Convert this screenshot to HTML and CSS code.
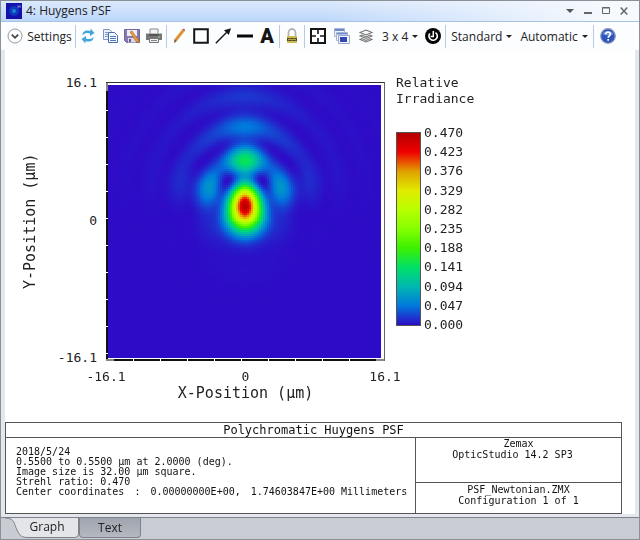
FILE: index.html
```html
<!DOCTYPE html>
<html lang="en">
<head>
    <meta charset="UTF-8">
    <title>4: Huygens PSF</title>
    <link rel="stylesheet" href="styles.css">
</head>
<body>

<div class="window">
    <header class="titlebar">
        <svg class="app-icon" width="16" height="16" viewBox="0 0 16 16">
            <rect width="16" height="16" fill="#1410a8"/>
            <circle cx="8" cy="8" r="5" fill="#1038c0"/>
            <circle cx="8" cy="8" r="2" fill="#1c88c8"/>
            <path d="M12 2v3M14 2v3M12 3.5h2" stroke="#7070e0" fill="none"/>
        </svg>
        <h1>4: Huygens PSF</h1>
        <div class="window-buttons">
            <button type="button" aria-label="Menu"><svg width="8" height="10" viewBox="0 0 8 10"><path d="M0 3h8L4 7z" fill="#555"/></svg></button>
            <button type="button" aria-label="Minimize"><svg width="8" height="10" viewBox="0 0 8 10"><path d="M0 6h8v2H0z" fill="#666"/></svg></button>
            <button type="button" aria-label="Maximize"><svg width="8" height="10" viewBox="0 0 8 10"><path d="M.5 1.5h7v6h-7zM0 2h8" stroke="#666" fill="none"/></svg></button>
            <button type="button" aria-label="Close"><svg width="8" height="10" viewBox="0 0 8 10"><path d="M.7 1.5l6.6 7M7.3 1.5l-6.6 7" stroke="#666" stroke-width="1.5"/></svg></button>
        </div>
    </header>

    <nav class="toolbar">
        <button type="button" class="settings">
            <svg width="16" height="16" viewBox="0 0 16 16"><circle cx="8" cy="8" r="7" fill="#fff" stroke="#999"/><path d="M4.8 6.6L8 9.8l3.2-3.2" fill="none" stroke="#444" stroke-width="1.8"/></svg>
            Settings
        </button>
        <span class="sep"></span>
        <button type="button" aria-label="Refresh">
            <svg width="16" height="16" viewBox="0 0 16 16"><path d="M2.500 7C2.500 3 6.500 1.500 10.500 3V.5l4 4.500-4.500 3V5.500C8 4.500 5 4.500 2.500 7z" fill="#42a4d8"/><path d="M13.500 9c0 4-4 5.500-8 4v2.500l-4-4.500L6 8v2.500c2 1 5 1 7.500-1.500z" fill="#42a4d8"/></svg>
        </button>
        <button type="button" aria-label="Copy">
            <svg width="16" height="16" viewBox="0 0 16 16"><path d="M1.500 1.500h6l2 2v8h-8z" fill="#eaf1fc" stroke="#7c98c8"/><path d="M3 4.500h4M3 6.500h4M3 8.500h4" stroke="#7c98c8"/><path d="M6.500 4.500h6l3 3v7h-9z" fill="#f4f8ff" stroke="#4a6cb0"/><path d="M8 8.500h6M8 10.500h6M8 12.500h6" stroke="#4f78c0"/></svg>
        </button>
        <button type="button" aria-label="Save">
            <svg width="16" height="16" viewBox="0 0 16 16"><path d="M.5 1.500h15v13h-13l-2-2z" fill="#8a78b4" stroke="#75659f"/><path d="M3 2h10v6H3z" fill="#efedf7"/><path d="M4 10h8v4.500H4z" fill="#ddd9ea"/><path d="M5 11h2v3H5z" fill="#66568e"/><path d="M6 4l2-1 6.500 9 .5 3-3-1.500z" fill="#e59c3c" stroke="#a86820" stroke-width=".6"/></svg>
        </button>
        <button type="button" aria-label="Print">
            <svg width="16" height="16" viewBox="0 0 16 16"><path d="M4 1h8v5H4z" fill="#f4f4f4" stroke="#888"/><path d="M0 5.500h3V8h10V5.500h3V12H0z" fill="#777"/><path d="M3 6h10v2H3z" fill="#555"/><path d="M3.500 10.500h9v4h-9z" fill="#f0f0f0" stroke="#777"/><path d="M5 12.500h6" stroke="#888"/><path d="M12 9h2" stroke="#8d8"/></svg>
        </button>
        <span class="sep"></span>
        <button type="button" aria-label="Pencil">
            <svg width="16" height="16" viewBox="0 0 16 16"><path d="M11 1.500L13.500 3.500 6 13 3.500 11z" fill="#e5a244"/><path d="M12.200 2.500L4.800 12" stroke="#bf7a28" stroke-width=".8"/><path d="M11 1.500q2-1.500 3 0l-.5 2z" fill="#c25a48"/><path d="M3.500 11L6 13l-3 2z" fill="#7a5530"/></svg>
        </button>
        <button type="button" aria-label="Rectangle">
            <svg width="16" height="16" viewBox="0 0 16 16"><path d="M1.200 1.200h13.600v13.600H1.200z" fill="none" stroke="#151515" stroke-width="2"/></svg>
        </button>
        <button type="button" aria-label="Arrow">
            <svg width="16" height="16" viewBox="0 0 16 16"><path d="M.8 15.200L11.500 4.500" stroke="#151515" stroke-width="1.400"/><path d="M16 .2L13.800 7 9 2.200z" fill="#151515"/></svg>
        </button>
        <button type="button" aria-label="Line">
            <svg width="16" height="16" viewBox="0 0 16 16"><path d="M0 6.500h16v3H0z" fill="#080808"/></svg>
        </button>
        <button type="button" class="letter">A</button>
        <span class="sep"></span>
        <button type="button" aria-label="Lock">
            <svg width="16" height="16" viewBox="0 0 16 16"><path d="M4.500 9V4.500a3.500 3.500 0 0 1 7 0V9" fill="none" stroke="#b4b4b4" stroke-width="1.800"/><path d="M3 8h10v7H3z" fill="#cdbb58"/><path d="M3 10h10v3H3z" fill="#4c4820"/><path d="M4 12l2-1 2 1 2-1 2 1" stroke="#d8c85a" fill="none"/></svg>
        </button>
        <span class="sep"></span>
        <div class="wide-icons">
            <button type="button" aria-label="Fit window">
                <svg width="16" height="16" viewBox="0 0 16 16"><path d="M1 1h14v14H1z" fill="#fff" stroke="#151515" stroke-width="2"/><path d="M8 1v5M8 10v5M1 8h5M10 8h5" stroke="#151515" stroke-width="1.600"/></svg>
            </button>
            <button type="button" aria-label="Windows">
                <svg width="16" height="16" viewBox="0 0 16 16"><path d="M.5 .5h10v8H.5z" fill="#edf1fb" stroke="#a7b4d8"/><path d="M1 1h9v2H1z" fill="#6f88cc"/><path d="M2.500 4.500h11v8h-11z" fill="#f2f5fc" stroke="#a7b4d8"/><path d="M3 5h10v1.500H3z" fill="#6f88cc"/><path d="M4.500 7.500h11v8h-11z" fill="#f2f5fc" stroke="#98a6d0"/><path d="M6 9h7v5H6z" fill="#3346b4"/></svg>
            </button>
            <button type="button" aria-label="Layers">
                <svg width="16" height="16" viewBox="0 0 16 16"><path d="M8 2l6 2.500L8 7 2 4.500zM2 8l2-1 4 2 4-2 2 1-6 2.500zM2 11.500l2-1 4 2 4-2 2 1L8 14z" fill="#fafafa" stroke="#777" stroke-width="1.100"/></svg>
            </button>
        </div>
        <button type="button" class="drop">3 x 4<span class="caret"></span></button>
        <button type="button" aria-label="Reset">
            <svg width="16" height="16" viewBox="0 0 16 16"><circle cx="8" cy="8" r="8" fill="#050505"/><path d="M4.800 5.500A4.200 4.200 0 1 0 10.500 4.600" fill="none" stroke="#fff" stroke-width="1.600"/><path d="M8.300 3v5.500H5.500" fill="none" stroke="#fff" stroke-width="1.500"/></svg>
        </button>
        <span class="sep"></span>
        <button type="button" class="drop">Standard<span class="caret"></span></button>
        <button type="button" class="drop">Automatic<span class="caret"></span></button>
        <span class="sep"></span>
        <button type="button" class="help" aria-label="Help">
            <svg width="16" height="16" viewBox="0 0 16 16"><circle cx="8" cy="8" r="7.300" fill="#2f55b8" stroke="#8e9cc0" stroke-width="1.200"/><path d="M2.500 6a6 5 0 0 1 11 0q-5.500 3-11 0z" fill="#6f92dc"/><path d="M5.700 6.200c0-3 4.800-2.800 4.600 0C10.200 8 8.200 7.800 8.200 9.800M8.200 11v1.800" fill="none" stroke="#fff" stroke-width="1.700"/></svg>
        </button>
    </nav>

    <main class="content">
        <section class="chart">
            <div class="y-title">Y-Position (µm)</div>
            <div class="y-ticks"><span>16.1</span><span>0</span><span>-16.1</span></div>
            <div class="plot"><canvas id="psf" width="137" height="137"></canvas></div>
            <div class="legend">
                <h2>Relative<br>Irradiance</h2>
                <div class="scale">
                    <div class="bar"></div>
                    <ul>
                        <li>0.470</li>
                        <li>0.423</li>
                        <li>0.376</li>
                        <li>0.329</li>
                        <li>0.282</li>
                        <li>0.235</li>
                        <li>0.188</li>
                        <li>0.141</li>
                        <li>0.094</li>
                        <li>0.047</li>
                        <li>0.000</li>
                    </ul>
                </div>
            </div>
            <div class="x-axis">
                <div class="x-ticks"><span>-16.1</span><span>0</span><span>16.1</span></div>
                <div class="x-title">X-Position (µm)</div>
            </div>
        </section>

        <section class="report">
            <h2>Polychromatic Huygens PSF</h2>
            <div class="details">
                <p>2018/5/24</p>
                <p>0.5500 to 0.5500 µm at 2.0000 (deg).</p>
                <p>Image size is 32.00 µm square.</p>
                <p>Strehl ratio: 0.470</p>
                <p class="coords"><span>Center coordinates</span><span>:</span><span>0.00000000E+00,</span><span>1.74603847E+00 Millimeters</span></p>
            </div>
            <div class="product">
                <p>Zemax</p>
                <p>OpticStudio 14.2 SP3&nbsp;&nbsp;</p>
            </div>
            <div class="file">
                <p>PSF_Newtonian.ZMX</p>
                <p>Configuration 1 of 1</p>
            </div>
        </section>
    </main>

    <footer class="tabs">
        <button type="button" class="tab active">
            <svg width="74" height="20" viewBox="0 0 74 20"><path d="M0 0C10 0 9 6 12 12S17 19.500 23 19.500H70Q73.500 19.500 73.500 16V0" fill="#e3e5e8" stroke="#7d828b"/></svg>
            <span>Graph</span>
        </button>
        <button type="button" class="tab">Text</button>
    </footer>
</div>

<script src="psf.js"></script>
</body>
</html>
```
FILE: styles.css
```css
* {
    box-sizing: border-box;
}
body {
    margin: 0;
    font-family: "Open Sans", sans-serif;
    font-size: 12px;
    color: #222;
}
h1, h2, p, ul {
    margin: 0;
    padding: 0;
    font-weight: normal;
}
ul {
    list-style: none;
}
button {
    padding: 0;
    border: none;
    background: none;
    font: inherit;
    color: inherit;
}
svg {
    display: block;
}
.window {
    display: flex;
    flex-direction: column;
    min-height: 100vh;
    border: 1px solid #8b8f96;
    background: #e4e8ee;
}

/* title bar */
.titlebar {
    display: flex;
    align-items: center;
    gap: 4px;
    height: 21px;
    padding: 0 11px 0 5px;
    border-bottom: 1px solid #a9c2e2;
    background: linear-gradient(90deg, transparent 50%, #f6f9fe 95%), linear-gradient(#dbe8fb, #bcd7fb);
}
.titlebar h1 {
    font-size: 12px;
    line-height: 16px;
}
.window-buttons {
    display: flex;
    gap: 10px;
    margin-left: auto;
}

/* toolbar */
.toolbar {
    display: flex;
    align-items: center;
    height: 28px;
    padding-left: 4px;
    background: #fcfdfe;
}
.toolbar button {
    display: flex;
    align-items: center;
    justify-content: center;
    width: 22px;
    height: 24px;
    flex: none;
    white-space: nowrap;
}
.toolbar .settings {
    width: 69px;
    gap: 4px;
}
.toolbar .letter {
    font-family: Roboto, sans-serif;
    font-size: 20px;
    font-weight: 900;
    color: #151515;
}
.wide-icons {
    display: flex;
}
.toolbar .wide-icons button {
    width: 24px;
}
.toolbar .drop {
    width: auto;
    gap: 4px;
    padding: 0 4px;
}
.toolbar .help {
    width: 26px;
}
.caret {
    border: 3px solid transparent;
    border-top-color: #222;
    border-bottom: none;
}
.sep {
    width: 1px;
    height: 23px;
    margin: 0 1px;
    background: #b9cbe0;
}

/* plot */
.content {
    flex: 1;
    display: flex;
    flex-direction: column;
    justify-content: space-between;
    margin: 0 4px;
    background: #fff;
}
.chart {
    display: grid;
    grid-template-columns: 50px 51px minmax(0, 1fr) 250px;
    padding-top: 32px;
    font-family: "DejaVu Sans Mono", monospace;
    font-size: 13px;
    line-height: 16px;
}
.y-title {
    justify-self: center;
    writing-mode: vertical-rl;
    transform: rotate(180deg);
    text-align: center;
    font-size: 15px;
}
.y-ticks {
    display: flex;
    flex-direction: column;
    justify-content: space-between;
    margin: -7px 9px -5px 0;
    text-align: right;
}
.plot {
    padding: 2px 3px 3px 2px;
    border-top: 1px solid #333;
    border-right: 1px solid #666;
    background:
        linear-gradient(#888, #888) 0 0 / 2px 8px no-repeat,
        linear-gradient(#888, #888) 0 100% / 8px 2px no-repeat,
        linear-gradient(#888, #888) 100% 100% / 8px 2px no-repeat,
        linear-gradient(#fff 1px, #111 1px) 0 0 / 2px 27px repeat-y,
        linear-gradient(90deg, #fff 1px, #111 1px) 0 100% / 27px 2px repeat-x,
        #fff;
}
.plot canvas {
    display: block;
    width: 100%;
    aspect-ratio: 1;
    background: #2e0bc6;
    image-rendering: pixelated;
}
.x-axis {
    grid-column: 3;
    margin-top: 8px;
    text-align: center;
}
.x-ticks {
    display: flex;
    justify-content: space-between;
    margin: 0 -20px;
}
.x-ticks span {
    width: 40px;
}
.x-title {
    font-size: 15px;
}

/* colour scale */
.legend {
    padding-left: 11px;
}
.legend h2 {
    margin-top: -7px;
    font-size: 13px;
}
.scale {
    display: flex;
    gap: 3px;
    margin-top: 25px;
}
.bar {
    width: 25px;
    height: 194px;
    border: 1px solid #555;
    background: linear-gradient(#b40000, #f00000 10%, #e0a000 20%, #e0ec00 30%, #b8ff00 40%, #84ff00 50%, #3cf000 60%, #00e068 70%, #00b8b0 80%, #0078dc 90%, #2e0bc6);
}
.scale ul {
    display: flex;
    flex-direction: column;
    justify-content: space-between;
    margin: -7px 0;
}

/* report block */
.report {
    display: grid;
    grid-template-columns: 2fr 1fr;
    grid-template-rows: 15px 45px 30px;
    margin-right: 13px;
    border: 1px solid #555;
    font-family: "DejaVu Sans Mono", monospace;
    font-size: 10px;
    line-height: 11px;
    color: #111;
}
.report h2 {
    grid-column: 1 / 3;
    border-bottom: 1px solid #555;
    text-align: center;
    font-size: 12px;
    line-height: 14px;
}
.details {
    grid-row: 2 / 4;
    padding: 9px 0 0 10px;
    border-right: 1px solid #555;
    line-height: 10px;
}
.coords {
    display: flex;
    gap: 10px;
    white-space: nowrap;
}
.product, .file {
    text-align: center;
}
.product {
    border-bottom: 1px solid #555;
}
.file {
    padding-top: 1px;
}

/* bottom tabs */
.tabs {
    display: flex;
    height: 22px;
    margin-top: 3px;
    padding-left: 4px;
    border-top: 1px solid #7d828b;
    background: #c9ccd2;
}
.tab {
    height: 20px;
    width: 62px;
    border: 1px solid #7d828b;
    border-top: none;
    border-radius: 0 0 4px 4px;
    background: linear-gradient(#9fa4ae, #b4b8c0);
}
.tab.active {
    display: grid;
    width: 74px;
    border: none;
    background: none;
}
.tab.active svg, .tab.active span {
    grid-area: 1 / 1;
}
.tab.active span {
    padding-left: 10px;
}
```
FILE: psf.js
```js
// Diffraction image of a circular pupil with coma and astigmatism
const COMA = 5.8;       // radians at the pupil edge
const ASTIGMATISM = 1.7;
const DEFOCUS = 0.9;
const PX_PER_UNIT = 8.2;
const CENTER_X = 137.5;
const CENTER_Y = 155;

// colours from 0 to the peak in equal steps
const COLORS = [
    [46, 11, 198], [0, 120, 220], [0, 184, 176], [0, 224, 104], [60, 240, 0], [132, 255, 0],
    [184, 255, 0], [224, 236, 0], [224, 160, 0], [240, 0, 0], [180, 0, 0]
];

function color(value) {
    const t = Math.min(value, 0.9999) * (COLORS.length - 1);
    const i = Math.floor(t);
    return COLORS[i].map((c, k) => c + (COLORS[i + 1][k] - c) * (t - i));
}

const canvas = document.getElementById('psf');
const size = canvas.width;
const n = 60;

// sum over the pupil width for each pupil row and image column
const rows = [];
for (let j = 0; j < n; j++) {
    const py = (j + 0.5) * 2 / n - 1;
    const re = new Array(size).fill(0);
    const im = new Array(size).fill(0);
    for (let i = 0; i < n; i++) {
        const px = (i + 0.5) * 2 / n - 1;
        const r2 = px * px + py * py;
        if (r2 > 1) continue;
        const phase = COMA * r2 * py + ASTIGMATISM * (py * py - px * px) + DEFOCUS * r2;
        for (let col = 0; col < size; col++) {
            const c = Math.cos(px * (col * 2 + 1 - CENTER_X) / PX_PER_UNIT);
            re[col] += c * Math.cos(phase);
            im[col] += c * Math.sin(phase);
        }
    }
    rows.push({ py, re, im });
}

const values = [];
for (let row = 0; row < size; row++) {
    const y = (CENTER_Y - row * 2 - 1) / PX_PER_UNIT;
    for (let col = 0; col < size; col++) {
        let re = 0;
        let im = 0;
        for (const p of rows) {
            const c = Math.cos(y * p.py);
            const s = Math.sin(y * p.py);
            re += p.re[col] * c + p.im[col] * s;
            im += p.im[col] * c - p.re[col] * s;
        }
        values.push(re * re + im * im);
    }
}

// move the image so that its peak sits in row 60
const peak = Math.max(...values);
const shift = Math.floor(values.indexOf(peak) / size) - 60;
const ctx = canvas.getContext('2d');
const image = ctx.createImageData(size, size);
values.forEach((value, i) => {
    const rgb = color(value / peak);
    image.data.set([rgb[0], rgb[1], rgb[2], 255], i * 4);
});
ctx.fillStyle = '#2e0bc6';
ctx.fillRect(0, 0, size, size);
ctx.putImageData(image, 0, -shift);
```
